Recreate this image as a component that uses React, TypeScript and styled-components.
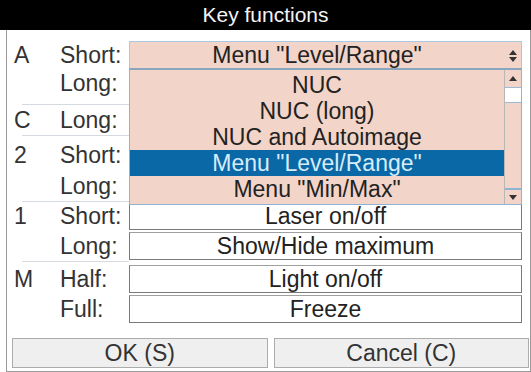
import React from "react";
import styled, { createGlobalStyle } from "styled-components";

const GlobalStyle = createGlobalStyle`
  html, body { margin: 0; padding: 0; background: #fff; }
  body { font-family: "Liberation Sans", Arial, sans-serif; }
  * { box-sizing: border-box; }
`;

const Window = styled.div`
  position: relative;
  width: 531px;
  height: 372px;
  display: flex;
  flex-direction: column;
  overflow: hidden;
  background: #fff;
`;

const TitleBar = styled.div`
  height: 30px;
  flex: none;
  background: #000;
  color: #f4f4f4;
  font-size: 21px;
  display: flex;
  align-items: center;
  justify-content: center;
`;

const Frame = styled.div`
  flex: 1;
  margin-left: 6px;
  border-left: 1px solid #9a9a9a;
  border-right: 1px solid #9a9a9a;
  border-bottom: 1px solid #9a9a9a;
  padding: 11px 0 3px 5px;
  display: flex;
  flex-direction: column;
`;

const Group = styled.div<{ $pt: number; $pb: number; $gap: number }>`
  display: flex;
  flex-direction: column;
  gap: ${(p) => p.$gap}px;
  padding: ${(p) => p.$pt}px 8px ${(p) => p.$pb}px 2px;
`;

const Separator = styled.div`
  flex: none;
  height: 1px;
  width: 107px;
  margin-left: 10px;
  background: #d4dadf;
`;

const Row = styled.div`
  display: grid;
  grid-template-columns: 46px 69px 1fr;
  align-items: center;
  height: 28px;
  font-size: 23px;
  line-height: 1;
  color: #333;
`;

const Key = styled.span``;
const Label = styled.span``;

const Field = styled.div`
  height: 28px;
  border: 1px solid #7a7a7a;
  border-top-color: #a0a0a0;
  background: #fff;
  color: #222;
  display: flex;
  align-items: center;
  justify-content: center;
`;

const Combo = styled.div`
  position: relative;
  height: 28px;
  border: 1px solid #a9c9e2;
  background: #f2d4c8;
  color: #222;
  padding-right: 17px;
  display: flex;
  align-items: center;
  justify-content: center;
`;

const ComboArrows = styled.svg`
  position: absolute;
  right: 4px;
  top: 8px;
`;

const DropList = styled.div`
  position: absolute;
  left: 129px;
  top: 68px;
  width: 393px;
  height: 137px;
  background: #f2d4c8;
  border: 1px solid #8fb3d2;
  border-top: 2px solid #8aa6bf;
  display: flex;
  font-size: 23px;
  line-height: 1;
  color: #222;
`;

const Items = styled.div`
  flex: 1;
  padding-top: 2px;
  display: flex;
  flex-direction: column;
`;

const Item = styled.div<{ $sel?: boolean }>`
  height: 26px;
  display: flex;
  align-items: center;
  justify-content: center;
  background: ${(p) => (p.$sel ? "#0a68a6" : "transparent")};
  color: ${(p) => (p.$sel ? "#d6ecfb" : "#222")};
`;

const ScrollBar = styled.div`
  width: 17px;
  border-left: 1px solid #b7b7b7;
  display: flex;
  flex-direction: column;
`;

const ScrollBtn = styled.div<{ $bottom?: boolean }>`
  height: 16px;
  display: flex;
  align-items: center;
  justify-content: center;
  ${(p) => (p.$bottom ? "border-top: 2px solid #8fb3d2;" : "")}
`;

const Thumb = styled.div`
  height: 16px;
  margin-top: 1px;
  background: #fff;
  border-top: 1px solid #9dbbd6;
  border-bottom: 1px solid #9dbbd6;
`;

const Track = styled.div`
  flex: 1;
`;

const ButtonBar = styled.div`
  margin-top: auto;
  display: grid;
  grid-template-columns: 1fr 1fr;
  gap: 6px;
  padding-right: 1px;
`;

const Button = styled.div`
  height: 30px;
  background: #efefef;
  border: 1px solid #acacac;
  color: #333;
  font-size: 23px;
  line-height: 1;
  display: flex;
  align-items: center;
  justify-content: center;
`;

type RowData = { key?: string; label: string; value: string; combo?: boolean };
type GroupData = { pt: number; pb: number; gap: number; rows: RowData[] };

const groups: GroupData[] = [
  {
    pt: 0,
    pb: 7,
    gap: 0,
    rows: [
      { key: "A", label: "Short:", value: 'Menu "Level/Range"', combo: true },
      { label: "Long:", value: "" },
    ],
  },
  { pt: 1, pb: 1, gap: 0, rows: [{ key: "C", label: "Long:", value: "" }] },
  {
    pt: 5,
    pb: 1,
    gap: 3,
    rows: [
      { key: "2", label: "Short:", value: "" },
      { label: "Long:", value: "" },
    ],
  },
  {
    pt: 0,
    pb: 1,
    gap: 2,
    rows: [
      { key: "1", label: "Short:", value: "Laser on/off" },
      { label: "Long:", value: "Show/Hide maximum" },
    ],
  },
  {
    pt: 3,
    pb: 0,
    gap: 2,
    rows: [
      { key: "M", label: "Half:", value: "Light on/off" },
      { label: "Full:", value: "Freeze" },
    ],
  },
];

const options = ["NUC", "NUC (long)", "NUC and Autoimage", 'Menu "Level/Range"', 'Menu "Min/Max"'];

export default function App() {
  return (
    <>
      <GlobalStyle />
      <Window>
        <TitleBar>Key functions</TitleBar>
        <Frame>
          {groups.map((g, gi) => (
            <React.Fragment key={gi}>
              {gi > 0 && <Separator />}
              <Group $pt={g.pt} $pb={g.pb} $gap={g.gap}>
                {g.rows.map((r, ri) => (
                  <Row key={ri}>
                    <Key>{r.key ?? ""}</Key>
                    <Label>{r.label}</Label>
                    {r.combo ? (
                      <Combo>
                        {r.value}
                        <ComboArrows width="8" height="12" viewBox="0 0 8 12">
                          <path d="M4 0 L8 5 L0 5 Z M0 7 L8 7 L4 12 Z" fill="#333" />
                        </ComboArrows>
                      </Combo>
                    ) : (
                      <Field>{r.value}</Field>
                    )}
                  </Row>
                ))}
              </Group>
            </React.Fragment>
          ))}
          <ButtonBar>
            <Button>OK (S)</Button>
            <Button>Cancel (C)</Button>
          </ButtonBar>
        </Frame>
        <DropList>
          <Items>
            {options.map((o, i) => (
              <Item key={i} $sel={i === 3}>
                {o}
              </Item>
            ))}
          </Items>
          <ScrollBar>
            <ScrollBtn>
              <svg width="8" height="5" viewBox="0 0 8 5">
                <path d="M4 0 L8 5 L0 5 Z" fill="#333" />
              </svg>
            </ScrollBtn>
            <Thumb />
            <Track />
            <ScrollBtn $bottom>
              <svg width="8" height="5" viewBox="0 0 8 5">
                <path d="M0 0 L8 0 L4 5 Z" fill="#333" />
              </svg>
            </ScrollBtn>
          </ScrollBar>
        </DropList>
      </Window>
    </>
  );
}
